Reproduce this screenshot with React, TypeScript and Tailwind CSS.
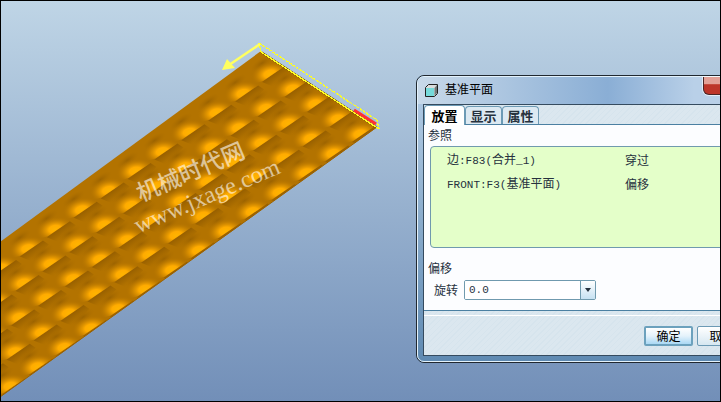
import { useState } from "react";

const columns = Array.from({ length: 17 }, (_, i) => i - 1);
const rows = [0, 1, 2, 3, 4];

const tabs = ["放置", "显示", "属性"];

const references = [
    { prefix: "边", code: ":F83(", label: "合并", suffix: "_1)", mode: "穿过" },
    { prefix: "", code: "FRONT:F3(", label: "基准平面", suffix: ")", mode: "偏移" },
];

const Model = () => {
    return (
        <svg width="720" height="402" viewBox="1 1 720 402" className="absolute top-0 left-0" aria-hidden="true">
            <defs>
                <clipPath id="plate">
                    <path d="M261 51L377 127L0 397V242Z" />
                </clipPath>
                {/* lit side of a dimple, cut off along its ridge */}
                <clipPath id="dimple">
                    <path d="M-24 -14H20L15 -6L-7 9L-24 14Z" />
                </clipPath>
                <radialGradient id="shine" gradientUnits="userSpaceOnUse" cx="0" cy="0" r="1" gradientTransform="translate(0 2) rotate(-12) scale(19 12)">
                    <stop offset="0" stopColor="#ffb400" />
                    <stop offset="0.32" stopColor="#ffab00" />
                    <stop offset="0.6" stopColor="#df9300" stopOpacity="0.7" />
                    <stop offset="1" stopColor="#b47300" stopOpacity="0" />
                </radialGradient>
                <linearGradient id="shade" gradientUnits="userSpaceOnUse" x1="4" y1="2" x2="10" y2="11">
                    <stop offset="0" stopColor="#986000" />
                    <stop offset="0.5" stopColor="#a66a00" stopOpacity="0.8" />
                    <stop offset="1" stopColor="#b37300" stopOpacity="0" />
                </linearGradient>
                <radialGradient id="hollow">
                    <stop offset="0" stopColor="#935d00" stopOpacity="0.7" />
                    <stop offset="1" stopColor="#a86b00" stopOpacity="0" />
                </radialGradient>
            </defs>
            <g clipPath="url(#plate)">
                <rect width="400" height="402" fill="#b37300" />
                {columns.map((c) =>
                    rows.map((r) => (
                        <g key={`${c}-${r}`} transform={`translate(${270 - c * 26.9 + r * 22.5} ${72 + c * 19.4 + r * 15})`}>
                            <ellipse cx="-8" cy="-9" rx="13" ry="5" transform="rotate(-34 -8 -9)" fill="url(#hollow)" />
                            <path d="M-8 10L15 -6L21 -2L4 15Z" fill="url(#shade)" />
                            <g clipPath="url(#dimple)">
                                <ellipse cx="0" cy="2" rx="22" ry="14" fill="url(#shine)" />
                            </g>
                        </g>
                    ))
                )}
            </g>
            <path d="M377 127L0 397" stroke="#9b6200" fill="none" />
            <path d="M261 52L376 127" stroke="#8b6200" strokeWidth="2" />
            <g shapeRendering="crispEdges" fill="none" stroke="#ffff20">
                <path d="M259 43L377 120L379 129" strokeWidth="1.3" strokeDasharray="3 1" />
                <path d="M259 43L261 52L379 129" strokeWidth="1.3" />
            </g>
            <path d="M354 110L376 124" stroke="#ff3030" strokeWidth="3" />
            <path d="M260 44L229 65" stroke="#ffff60" strokeWidth="2.6" />
            <path d="M222 70L227 59L235 68Z" fill="#ffff60" />
        </svg>
    );
};

const Watermark = () => {
    return (
        <div className="absolute top-[150px] left-[122px] w-[160px] -rotate-[23deg] text-center font-medium text-white/60">
            <p className="pr-4 font-['Noto_Sans_CJK_SC',sans-serif] text-[23px] leading-[30px]">机械时代网</p>
            <p className="pr-2 font-['Liberation_Serif','Noto_Sans_CJK_SC',serif] text-[24px] leading-[30px]">www.jxage.com</p>
        </div>
    );
};

const DatumDialog = () => {
    const [tab, setTab] = useState("放置");
    const [rotation, setRotation] = useState("0.0");

    return (
        <section className="absolute top-[74px] left-[415px] w-[349px] rounded-lg border border-[#202830] bg-[#6791b9] text-[12px] text-[#26313e]">
            <div className="rounded-[7px] border border-[#e4f2fb] bg-linear-to-b from-[#b3cde7] via-[#a5c1dc] via-20% to-[#5f8ab2] px-[5px] pb-[5px]">
                <header className="-mx-[5px] flex h-[27px] items-center gap-[7px] rounded-t-md bg-linear-to-r from-[#c8d9e9] via-[#8aaed5] via-55% to-[#b9d0e8] to-80% pl-[7px] text-black">
                    <svg width="13" height="13" viewBox="0 0 13 13" aria-hidden="true">
                        <path d="M0.5 3.5L3.5 0.5H12.5V9.5L9.5 12.5H0.5Z" fill="#d9dcdc" stroke="#202020" />
                        <path d="M1 4H9V12H1Z" fill="#76dada" />
                        <path d="M9.5 4V12L12 9V1Z" fill="#707878" />
                    </svg>
                    <h1 className="pb-1 text-[12px]">基准平面</h1>
                    <button
                        type="button"
                        aria-label="关闭"
                        className="mr-4 ml-auto h-[18px] w-[44px] self-start rounded-b-md border border-t-0 border-[#4b2525] bg-linear-to-b from-[#e3a096] from-40% to-[#bd3529] to-45% ring-1 ring-white/60"
                    />
                </header>

                <div className="border border-[#354b5f] bg-[repeating-linear-gradient(135deg,#dbe7ef_0px,#dbe7ef_3px,#d6e4ed_3px,#d6e4ed_4px)]">
                    <nav className="flex h-5 items-end border-b border-[#4b80a2]">
                        {tabs.map((name) => (
                            <button
                                key={name}
                                type="button"
                                onClick={() => setTab(name)}
                                className={`rounded-t-sm border border-b-0 border-[#6c9ab5] text-[13px] leading-4 font-bold ${
                                    tab === name ? "-mb-px h-5 w-[41px] bg-white text-black" : "h-[18px] w-[37px] bg-[#dce9f2]"
                                }`}
                            >
                                {name}
                            </button>
                        ))}
                    </nav>
                    <div className="border-b border-[#4b80a2] bg-[#fcfdff] pb-[10px]">
                        <h2 className="pl-1 leading-5">参照</h2>
                        <table className="mt-px ml-[6px] block h-[102px] w-[330px] rounded-sm border border-[#709aae] bg-[#e4ffc9] pt-px">
                            <tbody>
                                {references.map((item) => (
                                    <tr key={item.code} className="h-6">
                                        <td className="w-[194px] pl-4 whitespace-nowrap">
                                            {item.prefix}
                                            <span className="font-['Liberation_Mono',monospace] text-[11px]">{item.code}</span>
                                            {item.label}
                                            <span className="font-['Liberation_Mono',monospace] text-[11px]">{item.suffix}</span>
                                        </td>
                                        <td>{item.mode}</td>
                                    </tr>
                                ))}
                            </tbody>
                        </table>
                        <h2 className="mt-[10px] pl-1 leading-5">偏移</h2>
                        <div className="mt-[2px] flex h-5 items-center pl-[10px]">
                            <label htmlFor="rotation" className="w-[30px]">
                                旋转
                            </label>
                            <div className="flex h-5 w-[132px] overflow-hidden rounded-xs border border-[#709aae]">
                                <input
                                    id="rotation"
                                    value={rotation}
                                    onChange={(e) => setRotation(e.target.value)}
                                    className="min-w-0 flex-1 bg-white px-1 font-['Liberation_Mono',monospace] text-[11px] outline-none"
                                />
                                <button
                                    type="button"
                                    aria-label="选择数值"
                                    className="flex w-[15px] items-center justify-center border-l border-[#709aae] bg-linear-to-b from-white to-[#c6e1f2]"
                                >
                                    <svg width="6" height="4" viewBox="0 0 6 4">
                                        <path d="M0 0H6L3 4Z" fill="#26313e" />
                                    </svg>
                                </button>
                            </div>
                        </div>
                    </div>
                    <footer className="mt-1 flex h-10 items-center justify-end gap-1 border-t border-white pr-[11px]">
                        <button
                            type="button"
                            className="h-5 w-[49px] rounded-xs border-2 border-[#6ca1bd] bg-linear-to-b from-white via-[#e4f2fb] to-[#a9d8f4] leading-4 text-black"
                        >
                            确定
                        </button>
                        <button
                            type="button"
                            className="h-5 w-[49px] rounded-xs border border-[#6c9ab5] bg-linear-to-b from-white to-[#d6e7f1] leading-4 text-black"
                        >
                            取消
                        </button>
                    </footer>
                </div>
            </div>
        </section>
    );
};

const App = () => {
    return (
        <main className="relative h-screen overflow-hidden border border-black bg-linear-to-b from-[#bfd5e6] to-[#728fb8] font-['Noto_Sans_CJK_SC',sans-serif]">
            <Model />
            <Watermark />
            <DatumDialog />
        </main>
    );
};

export default App;
